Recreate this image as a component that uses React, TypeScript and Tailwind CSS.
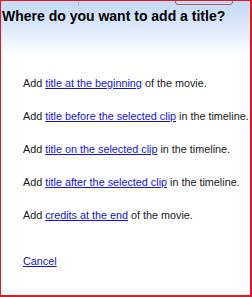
const options = [
  { link: 'title at the beginning', rest: 'of the movie.' },
  { link: 'title before the selected clip', rest: 'in the timeline.' },
  { link: 'title on the selected clip', rest: 'in the timeline.' },
  { link: 'title after the selected clip', rest: 'in the timeline.' },
  { link: 'credits at the end', rest: 'of the movie.' },
];

export default function App() {
  return (
    <div className="relative w-[252px] h-[297px] overflow-hidden border-t border-l border-r-2 border-b-2 border-[#e0191f] bg-white">
      {/* bits of the window above, cut off */}
      <div className="absolute left-[77px] top-0 w-px h-[5px] bg-[#b8b8c0]" />
      <div className="absolute left-[174px] -top-[6px] w-[58px] h-[10px] rounded-[3px] border border-[#b06060]" />

      <div className="h-[54px] bg-gradient-to-b from-[#c3d9f6] via-[#dde9fa] to-white pt-[6px]">
        <h1 className="font-['Liberation_Sans',Arial,sans-serif] font-bold text-[14px] leading-[18px] text-black pl-[1px] whitespace-nowrap">
          Where do you want to add a title?
        </h1>
      </div>

      <div className="pl-[22px] font-['Liberation_Sans',Arial,sans-serif] text-[10.8px] leading-[14px] text-[#1a1a1a]">
        <ul className="flex flex-col gap-[19px] pt-[21px]">
          {options.map((o) => (
            <li key={o.link} className="whitespace-nowrap">
              Add{' '}
              <a href="#" className="text-[#1212d8] underline">
                {o.link}
              </a>{' '}
              {o.rest}
            </li>
          ))}
        </ul>
        <div className="mt-[32px]">
          <a href="#" className="text-[#1212d8] underline">
            Cancel
          </a>
        </div>
      </div>
    </div>
  );
}
